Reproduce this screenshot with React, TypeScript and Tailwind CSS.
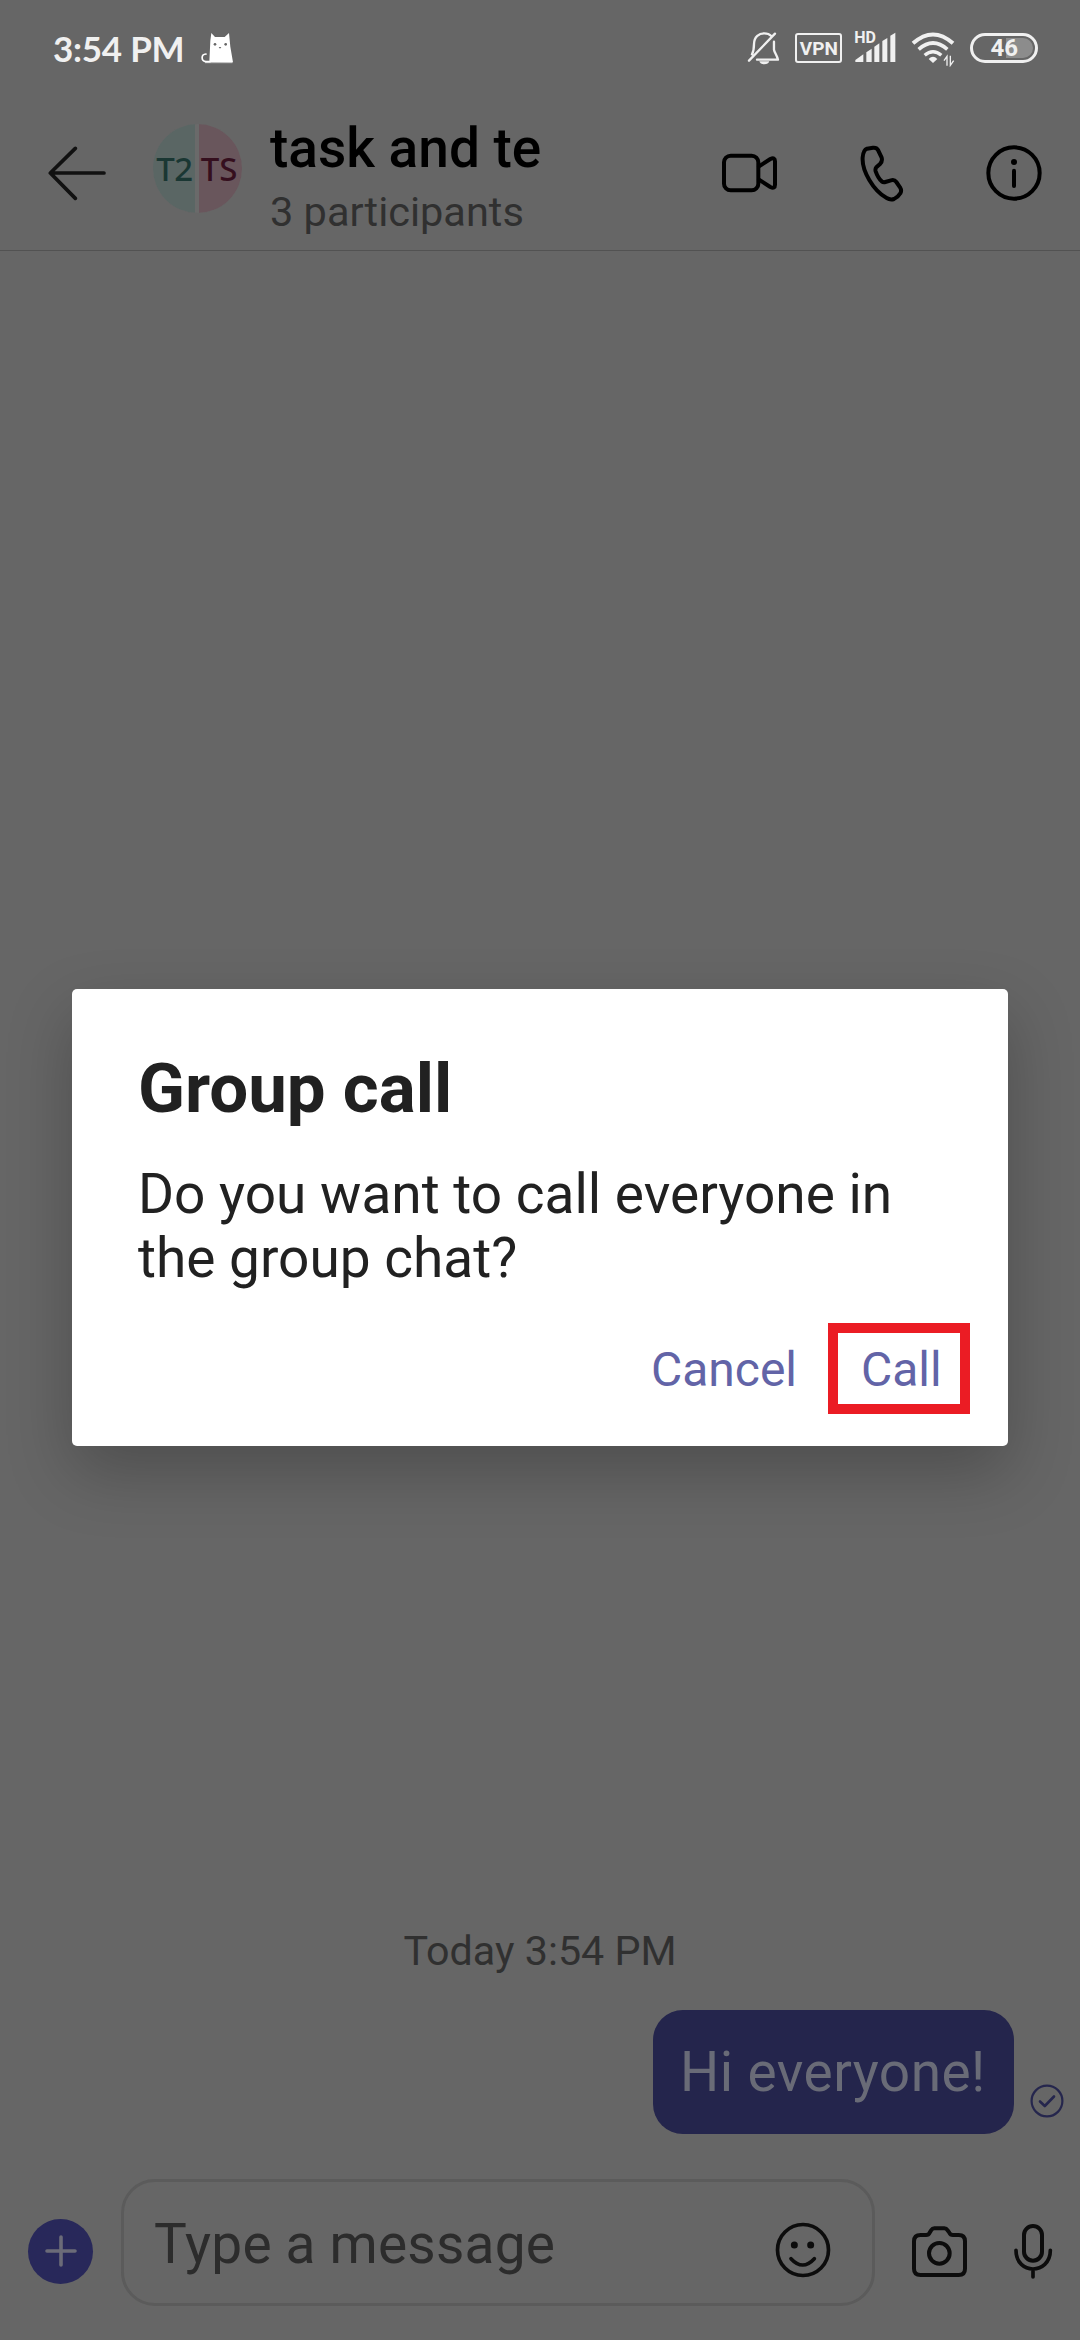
import React from "react";

type IconProps = { box: string; w: number; h: number; className?: string; children: React.ReactNode };

function Icon({ box, w, h, className = "", children }: IconProps) {
  return (
    <svg
      viewBox={box}
      width={w}
      height={h}
      fill="none"
      stroke="currentColor"
      strokeLinecap="round"
      strokeLinejoin="round"
      className={`block shrink-0 ${className}`}
    >
      {children}
    </svg>
  );
}

function StatusBar() {
  return (
    <div className="flex h-24 items-start text-[#f0f0f0]">
      <span className="ml-[53px] mt-[26px] w-[132px] whitespace-nowrap font-['Lato'] text-[35px] leading-[44px] font-bold tracking-[-0.25px]">
        3:54 PM
      </span>
      <Icon box="600 96 102 96" w={34} h={32} className="ml-[15px] mt-8 text-white">
        <path
          d="M628 186 L631 122 L634 99 L645 111 H674 L687 99 L691 140 L699 187 Z"
          fill="currentColor"
          stroke="none"
        />
        <path d="M630 185 H618 C603 184 602 163 618 162" strokeWidth="5" />
        <path d="M616 188 H696" strokeWidth="2" />
        <g fill="#666" stroke="none">
          <circle cx="645" cy="133" r="4" />
          <circle cx="677" cy="133" r="4" />
          <path d="M656 141 h8 l-4 5z" />
        </g>
      </Icon>
      <Icon box="80 92 100 102" w={33.3} h={34} className="ml-[513px] mt-[31px]">
        <path
          d="M95 162 C101 151 101 146 101 132 C101 108 117 99 132 99 C141 99 148 102 153 107 M161 124 V148 C162 156 170 165 173 178 H110 M86 181 L164 100"
          strokeWidth="7"
        />
        <path d="M117 183 H147 Q144 192 132 192 T117 183Z" fill="currentColor" stroke="none" />
      </Icon>
      <div className="ml-[15px] mt-[33px] flex h-[30px] w-[47px] items-center justify-center rounded-[3px] border-2 border-[#f0f0f0] font-['Roboto'] text-[19px] leading-none font-bold">
        VPN
      </div>
      <div className="relative ml-3 mt-8 h-8 w-[42px]">
        <Icon box="404 96 126 96" w={42} h={32}>
          <path
            d="M408 186 V180 L432 163 V186Z M441 186 V157 L457 146 V186Z M465 186 V140 L480 130 V186Z M489 186 V123 L504 114 V186Z M513 186 V107 L528 98 V186Z"
            fill="currentColor"
            stroke="none"
          />
        </Icon>
        <span className="absolute left-0 top-0 font-['Roboto'] text-[16px] leading-[11px] font-bold">HD</span>
      </div>
      <Icon box="574 94 132 108" w={44} h={36} className="ml-[15px] mt-[31px]">
        <g strokeLinecap="butt">
          <path d="M580 131 Q640 78 700 131" strokeWidth="12" />
          <path d="M597 149 Q640 111 683 149" strokeWidth="11" />
          <path d="M615 167 Q640 145 665 167" strokeWidth="10" />
        </g>
        <path d="M627 178 Q640 164 653 178 L640 190Z" fill="currentColor" stroke="none" />
        <path d="M682 198 V170 L673 183 M692 168 V197 L702 183" strokeWidth="4" strokeLinejoin="miter" strokeLinecap="butt" />
      </Icon>
      <div className="relative ml-[15px] mt-[33px] flex h-[30px] w-[68px] items-center justify-center rounded-full border-[3px] border-[#f0f0f0]">
        <div className="absolute right-[2px] top-[2px] h-5 w-[27px] rounded-r-full bg-[#8c8c8c]" />
        <span className="relative font-['Roboto'] text-[24px] leading-none font-bold">46</span>
      </div>
    </div>
  );
}

function GroupAvatar() {
  return (
    <div className="mt-7 ml-[47px] flex h-[89px] w-[89px] shrink-0 gap-[4px] overflow-hidden rounded-full bg-[#6a6a6a] font-['Noto_Sans'] text-[33px] leading-[89px] font-medium">
      <div className="flex w-[42px] justify-center bg-[#5a6664] pl-[1px] tracking-[-0.5px] text-[#1a3733]">T2</div>
      <div className="flex w-[43px] justify-center bg-[#69565c] pr-[3px] text-[#350f1e]">TS</div>
    </div>
  );
}

function Header() {
  return (
    <header className="flex h-[155px] items-start border-b border-[#525252]">
      <Icon box="144 438 174 164" w={58} h={54.7} className="mt-[50px] ml-12 text-[#111]">
        <path d="M226 445 L151 519 L226 595 M151 519 H312" strokeWidth="11" />
      </Icon>
      <GroupAvatar />
      <div className="ml-[28px] w-[440px] pt-5 font-['Roboto']">
        <h1 className="text-[55px] leading-[64px] font-medium text-black">task and te</h1>
        <p className="mt-[8px] text-[41.5px] leading-[48px] text-[#303030]">3 participants</p>
      </div>
      <Icon box="5 456 174 126" w={58} h={42} className="mt-14 ml-[11px] text-black">
        <rect x="14" y="467" width="103" height="104" rx="20" strokeWidth="12" />
        <path d="M119 499 L153 477 Q167 470 167 484 V554 Q167 568 153 561 L119 539" strokeWidth="12" />
      </Icon>
      <Icon box="420 430 132 174" w={44} h={58} className="mt-[47.5px] ml-[81px] text-black">
        <path
          d="M441 444 L459 441 Q470 440 474 448 L485 471 Q488 482 480 490 L469 500 Q465 505 467 512 Q474 532 485 542 Q490 546 496 544 L513 539 Q523 536 529 544 L540 560 Q546 570 541 578 Q534 590 522 595 Q511 599 500 592 C460 570 425 510 428 470 Q430 448 441 444Z"
          strokeWidth="12"
        />
      </Icon>
      <Icon box="798 435 168 168" w={56} h={56} className="mt-[49px] ml-[82px] text-black">
        <circle cx="882" cy="519" r="77" strokeWidth="12" />
        <circle cx="882" cy="486" r="9" fill="currentColor" stroke="none" />
        <path d="M882 512 V558" strokeWidth="12" />
      </Icon>
    </header>
  );
}

function Messages() {
  return (
    <main className="flex flex-1 flex-col justify-end pb-[45px] font-['Roboto']">
      <p className="text-center text-[41.25px] leading-[48px] text-[#303030]">Today 3:54 PM</p>
      <div className="mt-[35px] flex items-end justify-end pr-4">
        <div className="h-[124px] w-[361px] rounded-[30px] bg-[#24254c] pt-[30px] pl-[27px] text-[55px] leading-[64px] tracking-[0.45px] whitespace-nowrap text-[#696b77]">
          Hi everyone!
        </div>
        <Icon box="0 0 34 34" w={34} h={34} className="mb-4 ml-4 text-[#25264d]">
          <circle cx="17" cy="17" r="15.4" strokeWidth="2.2" />
          <path d="M10 17.5 L14.8 22 L24 12.5" strokeWidth="2.6" />
        </Icon>
      </div>
    </main>
  );
}

function Composer() {
  return (
    <footer className="flex h-[161px] items-start text-[#111]">
      <div className="mt-[39.5px] ml-7 flex h-[65px] w-[65px] shrink-0 items-center justify-center rounded-full bg-[#28285a]">
        <Icon box="0 0 32 32" w={32} h={32} className="text-[#6b6b78]">
          <path d="M16 2 V30 M2 16 H30" strokeWidth="3.6" />
        </Icon>
      </div>
      <div className="ml-7 flex h-[127px] w-[754px] shrink-0 items-start rounded-[34px] border-[3px] border-[#5b5b5b]">
        <span className="mt-[30px] ml-[30px] w-[621px] font-['Roboto'] text-[55px] leading-[64px] tracking-[0.2px] text-[#2c2c2c]">
          Type a message
        </span>
        <Icon box="106 218 168 168" w={56} h={56} className="mt-10 text-[#0c0c0c]">
          <circle cx="190" cy="302" r="76.5" strokeWidth="11" />
          <g fill="currentColor" stroke="none">
            <circle cx="164" cy="287" r="10.5" />
            <circle cx="213" cy="287" r="10.5" />
          </g>
          <path d="M154 328 Q189 366 224 328" strokeWidth="11" />
        </Icon>
      </div>
      <Icon box="512 224 171 162" w={57} h={54} className="mt-[45.5px] ml-9 text-[#0c0c0c]">
        <path
          d="M541 254 H557 Q565 254 568 247 L573 239 Q576 234 582 234 H612 Q618 234 621 239 L627 247 Q630 254 638 254 H655 Q674 254 674 273 V355 Q674 374 655 374 H541 Q521 374 521 355 V273 Q521 254 541 254Z"
          strokeWidth="12"
        />
        <circle cx="597" cy="309" r="31" strokeWidth="12" />
      </Icon>
      <Icon box="819 220 120 171" w={40} h={57} className="mt-[44.3px] ml-[45px] text-[#0c0c0c]">
        <rect x="852" y="229" width="54" height="104" rx="27" strokeWidth="12" />
        <path d="M828 302 C828 340 854 358 879 358 S931 340 931 302 M879 358 V382" strokeWidth="11" />
      </Icon>
    </footer>
  );
}

function GroupCallDialog() {
  return (
    <div className="absolute inset-0 flex items-start justify-center pt-[989px]">
      <section
        role="dialog"
        className="flex h-[457px] w-[936px] flex-col rounded-[5px] bg-white pt-[60px] pb-8 font-['Roboto'] text-[#212121] shadow-[0_26px_66px_rgba(0,0,0,0.24)]"
      >
        <h2 className="ml-[66px] text-[69px] leading-[80px] font-bold">Group call</h2>
        <p className="mt-[33px] ml-[66px] w-[800px] text-[55px] leading-[64px]">
          Do you want to call everyone in the group chat?
        </p>
        <div className="mt-auto flex items-center justify-end pr-[38px] text-[48px] leading-[56px] text-[#6264a7]">
          <button className="mr-[31px] pt-[3px]">Cancel</button>
          <button className="h-[91px] w-[142px] border-10 border-[#eb1c24] pt-[3px] pl-[23px] text-left">Call</button>
        </div>
      </section>
    </div>
  );
}

export default function App() {
  return (
    <div className="relative flex h-[2340px] w-[1080px] flex-col overflow-hidden bg-[#666]">
      <StatusBar />
      <Header />
      <Messages />
      <Composer />
      <GroupCallDialog />
    </div>
  );
}
